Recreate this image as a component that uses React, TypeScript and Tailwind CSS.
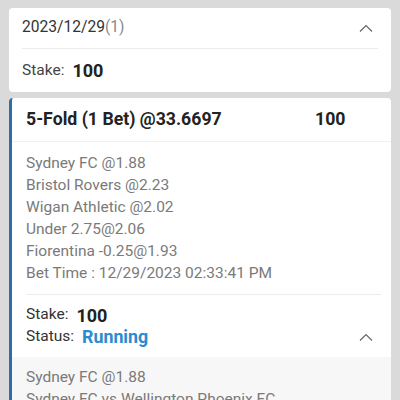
import React from "react";

function Chevron() {
  return (
    <svg width="14" height="8" viewBox="0 0 14 8" fill="none">
      <path d="M1 7.5 L7 1.5 L13 7.5" stroke="#666" strokeWidth="1.2" />
    </svg>
  );
}

export default function App() {
  return (
    <div
      className="w-[400px] h-[400px] overflow-hidden bg-[#dadada] pt-[8px] pl-[9px]"
      style={{ fontFamily: "Roboto, 'Noto Sans', sans-serif" }}
    >
      <div className="w-[382px] bg-white rounded-[4px]">
        <div className="h-[40px] flex items-center justify-between pl-[13px] pr-[18px]">
          <div className="text-[15.6px] text-[#333]">
            2023/12/29<span className="text-[#888]">(1)</span>
          </div>
          <Chevron />
        </div>
        <div className="mx-[13px] h-px bg-[#ececec]" />
        <div className="h-[43px] flex items-center pl-[13px] gap-[8px]">
          <span className="text-[15.5px] text-[#444]">Stake:</span>
          <span className="text-[18px] font-bold text-[#222]">100</span>
        </div>
      </div>

      <div className="mt-[6px] w-[382px] bg-white rounded-[4px] border-l-[3px] border-[#2c6ea5]">
        <div className="h-[43px] flex items-center pl-[14px]">
          <span className="w-[289px] text-[17.7px] font-bold text-[#222]">5-Fold (1 Bet) @33.6697</span>
          <span className="text-[17.7px] font-bold text-[#222]">100</span>
        </div>
        <div className="h-px bg-[#f0f0f0]" />
        <div className="pl-[14px] pt-[10px] pb-[10px] text-[15.5px] leading-[22px] text-[#7a7a7a]">
          <div>Sydney FC @1.88</div>
          <div>Bristol Rovers @2.23</div>
          <div>Wigan Athletic @2.02</div>
          <div>Under 2.75@2.06</div>
          <div>Fiorentina -0.25@1.93</div>
          <div>Bet Time : 12/29/2023 02:33:41 PM</div>
        </div>
        <div className="ml-[14px] mr-[10px] h-px bg-[#ececec]" />
        <div className="pl-[14px] pr-[18px] pt-[9px] pb-[9px]">
          <div className="flex items-center gap-[8px] h-[22px]">
            <span className="text-[15.5px] text-[#333]">Stake:</span>
            <span className="text-[18px] font-bold text-[#222]">100</span>
          </div>
          <div className="flex items-center justify-between h-[22px]">
            <div className="flex items-center gap-[8px]">
              <span className="text-[15.5px] text-[#333]">Status:</span>
              <span className="text-[17.8px] font-bold text-[#2a8bd0]">Running</span>
            </div>
            <Chevron />
          </div>
        </div>
        <div className="bg-[#f7f7f7] pl-[14px] pt-[9px] text-[15.5px] leading-[22px] text-[#7a7a7a] h-[60px]">
          <div>Sydney FC @1.88</div>
          <div>Sydney FC vs Wellington Phoenix FC</div>
        </div>
      </div>
    </div>
  );
}
